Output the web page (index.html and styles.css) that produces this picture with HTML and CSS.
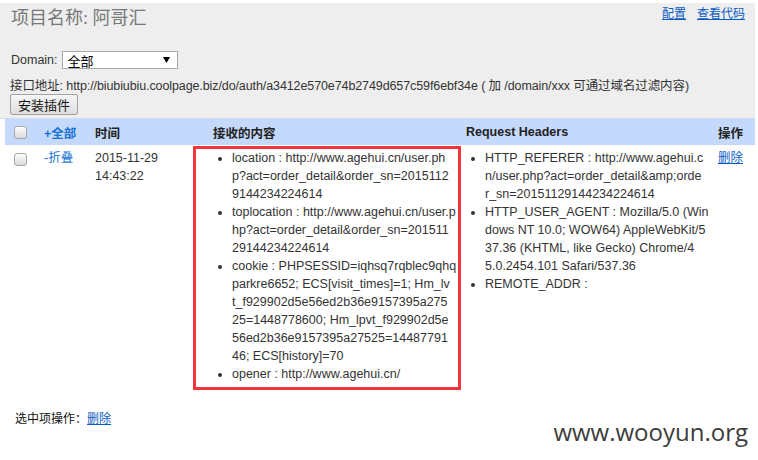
FILE: index.html
```html
<!DOCTYPE html>
<html lang="zh-CN">
<head>
<meta charset="utf-8">
<title>项目名称: 阿哥汇</title>
<link rel="stylesheet" href="styles.css">
</head>
<body>
<div class="page">
  <div class="topbar">
    <div class="title-row">
      <h1 class="title">项目名称: 阿哥汇</h1>
      <nav class="links"><a href="#">配置</a><a href="#">查看代码</a></nav>
    </div>
    <div class="domain-row">
      <label class="domain-label">Domain:</label>
      <div class="select">
        <span>全部</span>
        <svg class="arrow" width="7" height="6" viewBox="0 0 7 6"><polygon points="0,0 7,0 3.5,6" fill="#000"/></svg>
      </div>
    </div>
    <div class="api">接口地址: http://biubiubiu.coolpage.biz/do/auth/a3412e570e74b2749d657c59f6ebf34e ( 加 /domain/xxx 可通过域名过滤内容)</div>
    <button class="btn" type="button">安装插件</button>
  </div>

  <table class="list">
    <colgroup>
      <col class="c-check"><col class="c-toggle"><col class="c-time"><col class="c-content"><col class="c-headers"><col class="c-op">
    </colgroup>
    <thead>
      <tr>
        <th><span class="cb"></span></th>
        <th><a class="toggle" href="#">+全部</a></th>
        <th>时间</th>
        <th>接收的内容</th>
        <th>Request Headers</th>
        <th>操作</th>
      </tr>
    </thead>
    <tbody>
      <tr>
        <td><span class="cb"></span></td>
        <td><a class="toggle" href="#">-折叠</a></td>
        <td>2015-11-29<br>14:43:22</td>
        <td class="content">
          <ul class="kv">
            <li>location : http://www.agehui.cn/user.ph<br>p?act=order_detail&amp;order_sn=2015112<br>9144234224614</li>
            <li>toplocation : http://www.agehui.cn/user.p<br>hp?act=order_detail&amp;order_sn=201511<br>29144234224614</li>
            <li>cookie : PHPSESSID=iqhsq7rqblec9qhq<br>parkre6652; ECS[visit_times]=1; Hm_lv<br>t_f929902d5e56ed2b36e9157395a275<br>25=1448778600; Hm_lpvt_f929902d5e<br>56ed2b36e9157395a27525=14487791<br>46; ECS[history]=70</li>
            <li>opener : http://www.agehui.cn/</li>
          </ul>
          <div class="mark"></div>
        </td>
        <td>
          <ul class="kv">
            <li>HTTP_REFERER : http://www.agehui.c<br>n/user.php?act=order_detail&amp;amp;orde<br>r_sn=20151129144234224614</li>
            <li>HTTP_USER_AGENT : Mozilla/5.0 (Win<br>dows NT 10.0; WOW64) AppleWebKit/5<br>37.36 (KHTML, like Gecko) Chrome/4<br>5.0.2454.101 Safari/537.36</li>
            <li>REMOTE_ADDR :</li>
          </ul>
        </td>
        <td><a class="link" href="#">删除</a></td>
      </tr>
    </tbody>
  </table>

  <div class="batch">选中项操作：<a class="link" href="#">删除</a></div>
  <div class="watermark">www.wooyun.org</div>
</div>
</body>
</html>
```

FILE: styles.css
```css
* { box-sizing: border-box; }

html, body {
  margin: 0;
  background: #fff;
}

body {
  font-family: "Liberation Sans", Arial, "Noto Sans CJK SC", sans-serif;
  font-size: 12.5px;
  color: #333;
}

.page {
  position: relative;
  width: 758px;
  height: 460px;
  padding: 3px 3px 0 0;
}

/* top gray panel */
.topbar {
  height: 116px;
  background: #eee;
  border-bottom: 1px solid #cfdcf5;
  padding: 2px 10px 0 10px;
}

.title-row {
  display: flex;
  justify-content: space-between;
  align-items: flex-start;
  height: 26px;
}

.title {
  margin: 0;
  padding-left: 1px;
  font-family: "Liberation Serif", "Noto Sans CJK SC", serif;
  font-size: 18px;
  font-weight: normal;
  line-height: 26px;
  color: #777;
}

.links {
  display: flex;
  gap: 11px;
  font-family: "Noto Sans CJK SC", sans-serif;
  font-size: 12px;
  line-height: 16px;
}

.links a,
.link {
  color: #0a5bc4;
  text-decoration: underline;
}

.domain-row {
  display: flex;
  align-items: center;
  height: 18px;
  margin-top: 20px;
  padding-left: 1px;
}

.select {
  display: flex;
  align-items: center;
  justify-content: space-between;
  width: 116px;
  height: 18px;
  margin-left: 4px;
  padding: 0 7px 0 5px;
  background: #fff;
  border: 1px solid #a9a9a9;
  font-size: 13px;
  color: #000;
}

.api {
  margin-top: 9px;
  line-height: 16px;
  white-space: nowrap;
  letter-spacing: -0.1px;
}

.btn {
  display: block;
  height: 21px;
  margin: 0;
  padding: 0 7px;
  font-family: "Noto Sans CJK SC", sans-serif;
  font-size: 13px;
  line-height: 19px;
  color: #111;
  background: linear-gradient(#f7f7f7, #dddddd);
  border: 1px solid #a3a3a3;
  border-radius: 2px;
}

/* table */
.list {
  width: 750px;
  margin-left: 5px;
  border-collapse: collapse;
  table-layout: fixed;
}

.c-check { width: 31px; }
.c-toggle { width: 51px; }
.c-time { width: 118px; }
.c-content { width: 253px; }
.c-headers { width: 252px; }
.c-op { width: 45px; }

.list th {
  height: 26px;
  padding: 0 8px;
  background: #c5d9fc;
  text-align: left;
  vertical-align: middle;
  font-weight: bold;
  color: #222;
}

.list th:first-child,
.list td:first-child {
  padding-left: 9px;
  padding-right: 0;
}

.list td {
  padding: 4px 8px;
  vertical-align: top;
  line-height: 18px;
}

.list td.content {
  position: relative;
}

.cb {
  display: block;
  width: 13px;
  height: 13px;
  border: 1px solid #a8a8a8;
  border-radius: 3px;
  background: linear-gradient(#fdfdfd, #dadada);
}

.list td .cb {
  margin-top: 4px;
}

.toggle {
  color: #1672d4;
  text-decoration: none;
}

.kv {
  margin: 0;
  padding-left: 19px;
  white-space: nowrap;
}

.kv li {
  line-height: 18px;
}

/* annotation frame drawn on the screenshot */
.mark {
  position: absolute;
  top: 1px;
  left: -12px;
  right: -3px;
  bottom: -3px;
  border: 3px solid #f2343a;
  pointer-events: none;
}

.batch {
  margin-top: 22px;
  padding-left: 15px;
  line-height: 18px;
  font-family: "Noto Sans CJK SC", "Liberation Sans", sans-serif;
  font-size: 12px;
  color: #111;
}

.watermark {
  position: absolute;
  right: 10px;
  top: 417px;
  font-family: "Open Sans", sans-serif;
  font-size: 24px;
  line-height: 30px;
  color: #3c3c3c;
}
```
